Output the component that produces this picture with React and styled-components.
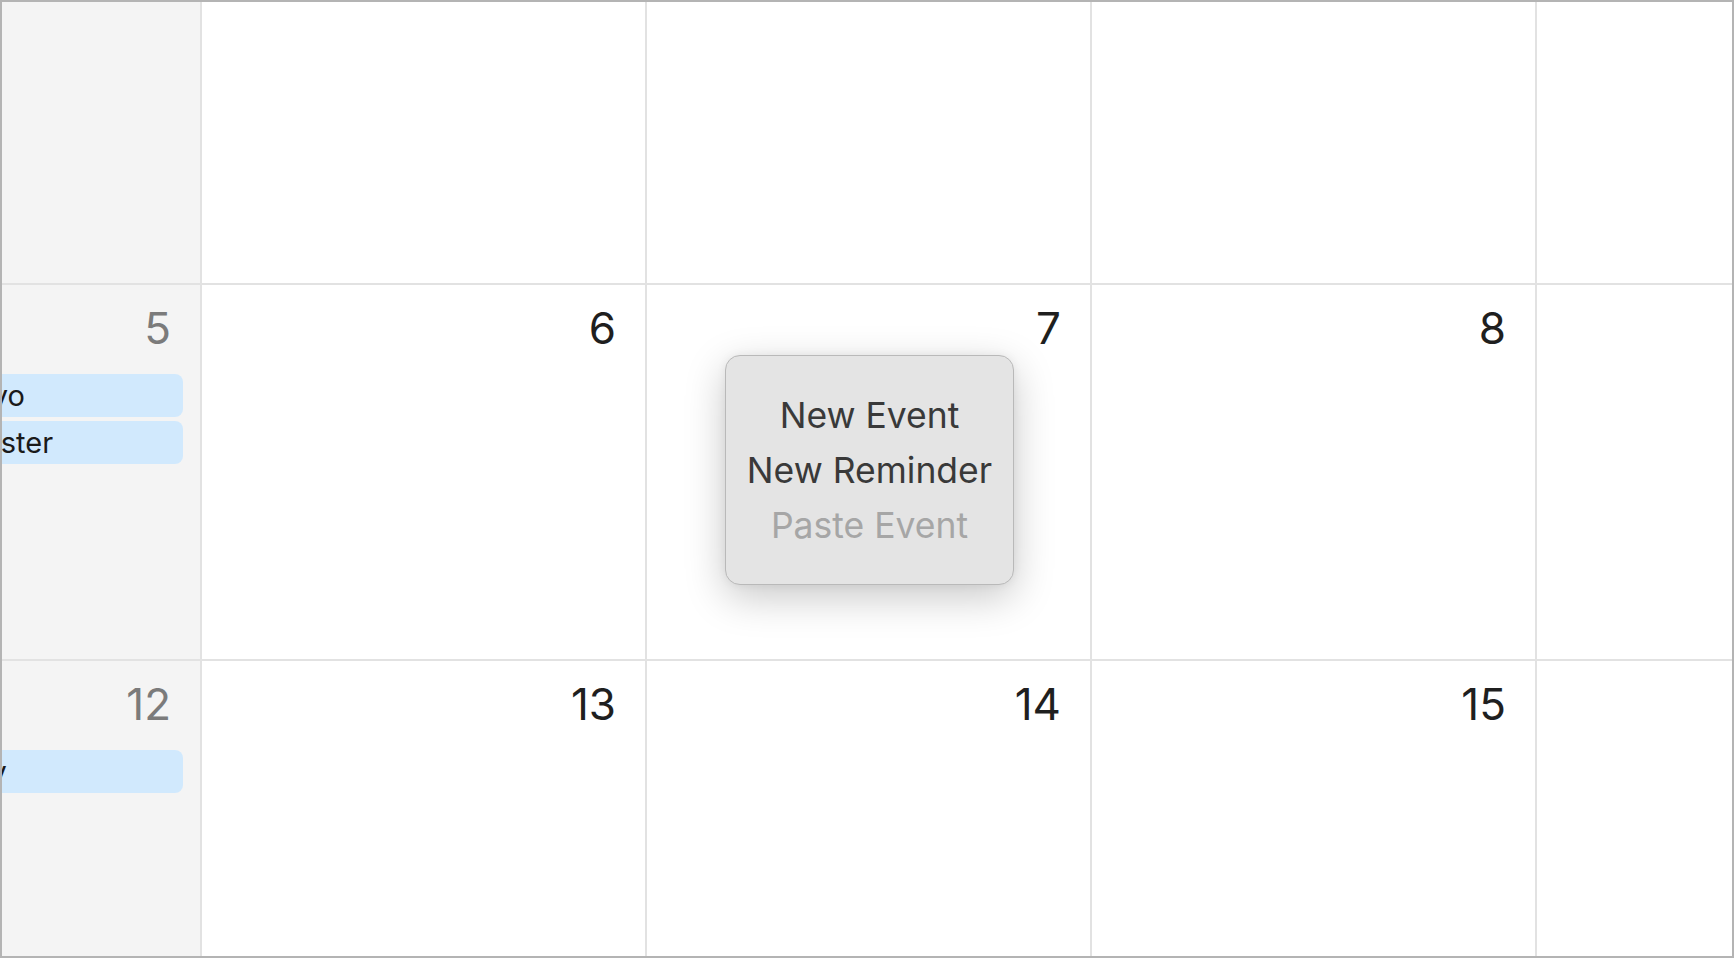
import styled, { createGlobalStyle } from "styled-components";

const GlobalStyle = createGlobalStyle`
  html, body {
    margin: 0;
    padding: 0;
    background: #ffffff;
  }
  body {
    font-family: Inter, "Noto Sans", "Liberation Sans", sans-serif;
  }
`;

// the view is scrolled: first week above the top edge, Thursday past the right edge
const weeks = [
  [{}, {}, {}, {}, {}, {}, {}],
  [
    {
      day: 5,
      events: [
        { title: "Tokyo", indent: 177 },
        { title: "Easter", indent: 202 },
      ],
    },
    { day: 6 },
    { day: 7 },
    { day: 8 },
    {},
    {},
    {},
  ],
  [
    { day: 12, events: [{ title: "Birthday", indent: 128 }] },
    { day: 13 },
    { day: 14 },
    { day: 15 },
    {},
    {},
    {},
  ],
];

const App = () => {
  return (
    <>
      <GlobalStyle />
      <Frame>
        <Month>
          {weeks.map((week, w) =>
            week.map((cell, d) => {
              const weekend = d === 0 || d === 6;
              return (
                <Cell key={`${w}-${d}`} $weekend={weekend}>
                  {cell.day && <DayNumber $weekend={weekend}>{cell.day}</DayNumber>}
                  {cell.events && (
                    <Events>
                      {cell.events.map((ev) => (
                        <EventPill key={ev.title} $indent={ev.indent}>
                          {ev.title}
                        </EventPill>
                      ))}
                    </Events>
                  )}
                </Cell>
              );
            })
          )}
        </Month>
        <ContextMenu>
          <MenuItem>New Event</MenuItem>
          <MenuItem>New Reminder</MenuItem>
          <MenuItem $disabled>Paste Event</MenuItem>
        </ContextMenu>
      </Frame>
    </>
  );
};

const Frame = styled.div`
  position: relative;
  box-sizing: border-box;
  width: 1734px;
  height: 958px;
  border: 2px solid #b4b4b4;
  overflow: hidden;
  background: #ffffff;
`;

const Month = styled.div`
  display: grid;
  grid-template-columns: repeat(7, 445px);
  grid-auto-rows: 376px;
  margin-left: -245px;
  margin-top: -93px;
`;

const Cell = styled.div`
  box-sizing: border-box;
  display: flex;
  flex-direction: column;
  border-right: 2px solid #e2e2e2;
  border-bottom: 2px solid #e2e2e2;
  background: ${(p) => (p.$weekend ? "#f4f4f4" : "#ffffff")};
  padding: 21px 0 0 0;
  overflow: hidden;
`;

const DayNumber = styled.div`
  align-self: flex-end;
  margin-right: 29px;
  font-size: 44px;
  line-height: 44px;
  font-weight: 400;
  color: ${(p) => (p.$weekend ? "#7b7b7b" : "#1f1f1f")};
`;

const Events = styled.div`
  display: flex;
  flex-direction: column;
  gap: 4px;
  margin: 24px 17px 0 8px;
`;

const EventPill = styled.div`
  box-sizing: border-box;
  height: 43px;
  border-radius: 8px;
  background: #d1e9fd;
  color: #1a1a1a;
  font-size: 29px;
  line-height: 43px;
  padding-left: ${(p) => p.$indent}px;
  white-space: nowrap;
  overflow: hidden;
`;

const ContextMenu = styled.div`
  position: absolute;
  left: 723px;
  top: 353px;
  box-sizing: border-box;
  width: 289px;
  height: 230px;
  padding: 32px 0 0 0;
  border: 1px solid #b9b9b9;
  border-radius: 15px;
  background: #e4e4e4;
  box-shadow: 0 12px 40px rgba(0, 0, 0, 0.22), 0 0 10px rgba(0, 0, 0, 0.06);
  display: flex;
  flex-direction: column;
  align-items: center;
`;

const MenuItem = styled.div`
  font-size: 35.5px;
  line-height: 55px;
  color: ${(p) => (p.$disabled ? "#a6a6a6" : "#393939")};
`;

export default App;
